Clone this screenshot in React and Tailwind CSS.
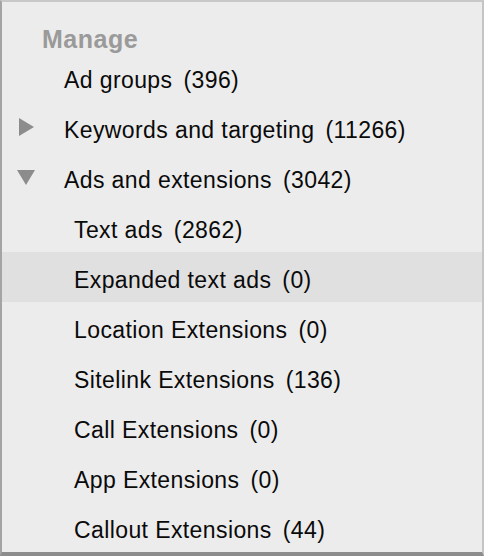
import React from "react";

const rows = [
  { label: "Ad groups", count: "(396)", indent: "pl-[62px]" },
  { label: "Keywords and targeting", count: "(11266)", indent: "pl-[62px]", arrow: "right" },
  { label: "Ads and extensions", count: "(3042)", indent: "pl-[62px]", arrow: "down" },
  { label: "Text ads", count: "(2862)", indent: "pl-[72px]" },
  { label: "Expanded text ads", count: "(0)", indent: "pl-[72px]", active: true },
  { label: "Location Extensions", count: "(0)", indent: "pl-[72px]" },
  { label: "Sitelink Extensions", count: "(136)", indent: "pl-[72px]" },
  { label: "Call Extensions", count: "(0)", indent: "pl-[72px]" },
  { label: "App Extensions", count: "(0)", indent: "pl-[72px]" },
  { label: "Callout Extensions", count: "(44)", indent: "pl-[72px]" },
];

function Arrow({ dir }) {
  if (dir === "right") {
    return (
      <svg className="absolute left-[17px] top-[16px]" width="15" height="18" viewBox="0 0 15 18">
        <polygon points="0,0 15,9 0,18" fill="#8c8c8c" />
      </svg>
    );
  }
  return (
    <svg className="absolute left-[15px] top-[18px]" width="18" height="15" viewBox="0 0 18 15">
      <polygon points="0,0 18,0 9,15" fill="#8c8c8c" />
    </svg>
  );
}

export default function App() {
  return (
    <div className="w-[484px] h-[556px] bg-[#ececec] border-t-[2px] border-t-[#c8c8c8] border-l-[2px] border-l-[#a4a4a4] border-r-[2px] border-r-[#c4c4c4] border-b-[4px] border-b-[#8c8c8c] overflow-hidden font-['Liberation_Sans',Arial,sans-serif]">
      <div className="h-[50px] pl-[40px] pt-[23px] text-[25px] leading-[28px] font-bold tracking-[0.5px] text-[#9a9a9a]">Manage</div>
      <div className="flex flex-col">
        {rows.map((r) => (
          <div
            key={r.label}
            className={`relative h-[50px] pt-[7px] flex items-center ${r.indent} ${r.active ? "bg-[#e0e0e0]" : ""} text-[23px] tracking-[0.4px] text-[#0a0a0a]`}
          >
            {r.arrow && <Arrow dir={r.arrow} />}
            <span>{r.label}</span>
            <span className="ml-[11px]">{r.count}</span>
          </div>
        ))}
      </div>
    </div>
  );
}
